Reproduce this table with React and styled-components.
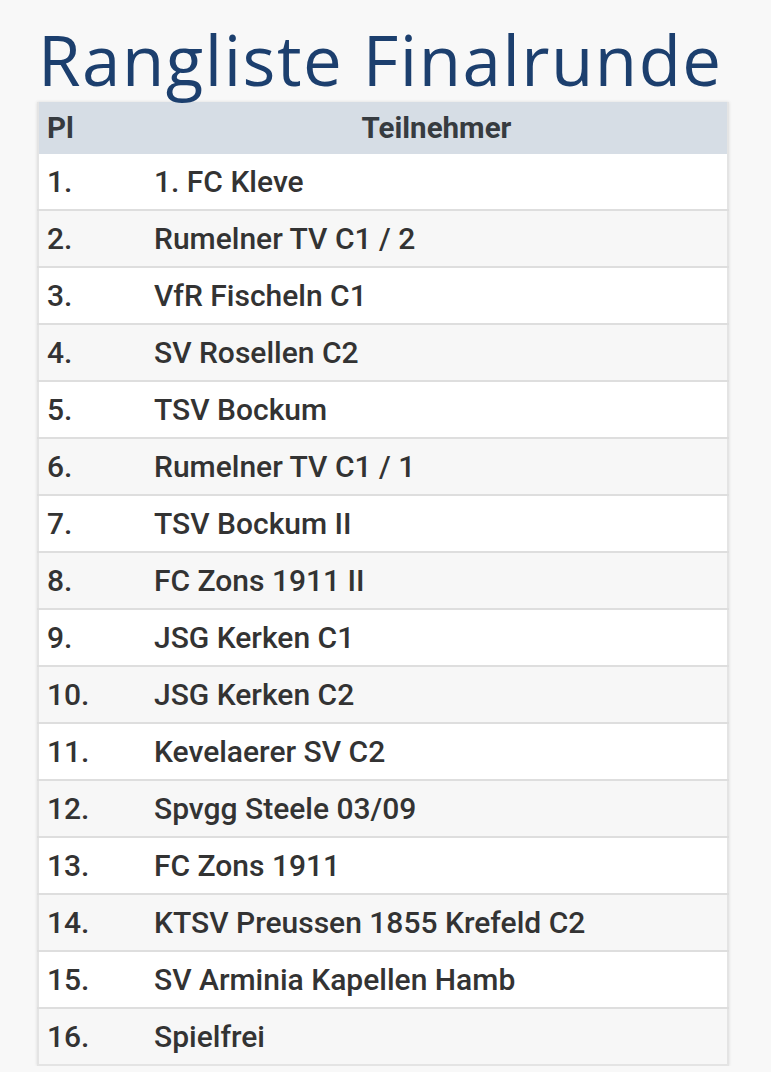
import React from 'react';
import styled, { createGlobalStyle } from 'styled-components';

const GlobalStyle = createGlobalStyle`
  html, body {
    margin: 0;
    padding: 0;
    background: #f8f8f8;
  }
`;

const Page = styled.div`
  padding: 16px 0 0 37px;
  width: 692px;
`;

const Title = styled.h1`
  margin: 0 0 0 1px;
  font-family: 'Open Sans', sans-serif;
  font-weight: 400;
  font-size: 69px;
  line-height: 86px;
  color: #1c3f6e;
  letter-spacing: 1.5px;
  white-space: nowrap;
`;

const Table = styled.table`
  width: 692px;
  border-collapse: collapse;
  font-family: Roboto, 'Liberation Sans', sans-serif;
  font-size: 30px;
  font-weight: 500;
  color: #333333;
  box-shadow: 0 0 3px rgba(0, 0, 0, 0.12);
  border: 2px solid #e4e4e4;
  border-top: none;
`;

const HeadCell = styled.th`
  background: #d6dde5;
  height: 52px;
  padding: 0 8px;
  font-weight: 700;
  font-size: 29.5px;
  text-align: ${(p) => (p.left ? 'left' : 'center')};
  width: ${(p) => (p.left ? '91px' : 'auto')};
  color: #363b40;
`;

const Row = styled.tr`
  background: ${(p) => (p.striped ? '#f7f7f7' : '#ffffff')};
  border-top: 2px solid #dedede;
  &:first-child {
    border-top: none;
  }
`;

const Cell = styled.td`
  height: 55px;
  padding: 0 8px;
  white-space: nowrap;
`;

const teams = [
  '1. FC Kleve',
  'Rumelner TV C1 / 2',
  'VfR Fischeln C1',
  'SV Rosellen C2',
  'TSV Bockum',
  'Rumelner TV C1 / 1',
  'TSV Bockum II',
  'FC Zons 1911 II',
  'JSG Kerken C1',
  'JSG Kerken C2',
  'Kevelaerer SV C2',
  'Spvgg Steele 03/09',
  'FC Zons 1911',
  'KTSV Preussen 1855 Krefeld C2',
  'SV Arminia Kapellen Hamb',
  'Spielfrei',
];

const App = () => (
  <Page>
    <GlobalStyle />
    <Title>Rangliste Finalrunde</Title>
    <Table>
      <thead>
        <tr>
          <HeadCell left>Pl</HeadCell>
          <HeadCell>Teilnehmer</HeadCell>
        </tr>
      </thead>
      <tbody>
        {teams.map((team, i) => (
          <Row key={team} striped={i % 2 === 1}>
            <Cell>{i + 1}.</Cell>
            <Cell>{team}</Cell>
          </Row>
        ))}
      </tbody>
    </Table>
  </Page>
);

export default App;
